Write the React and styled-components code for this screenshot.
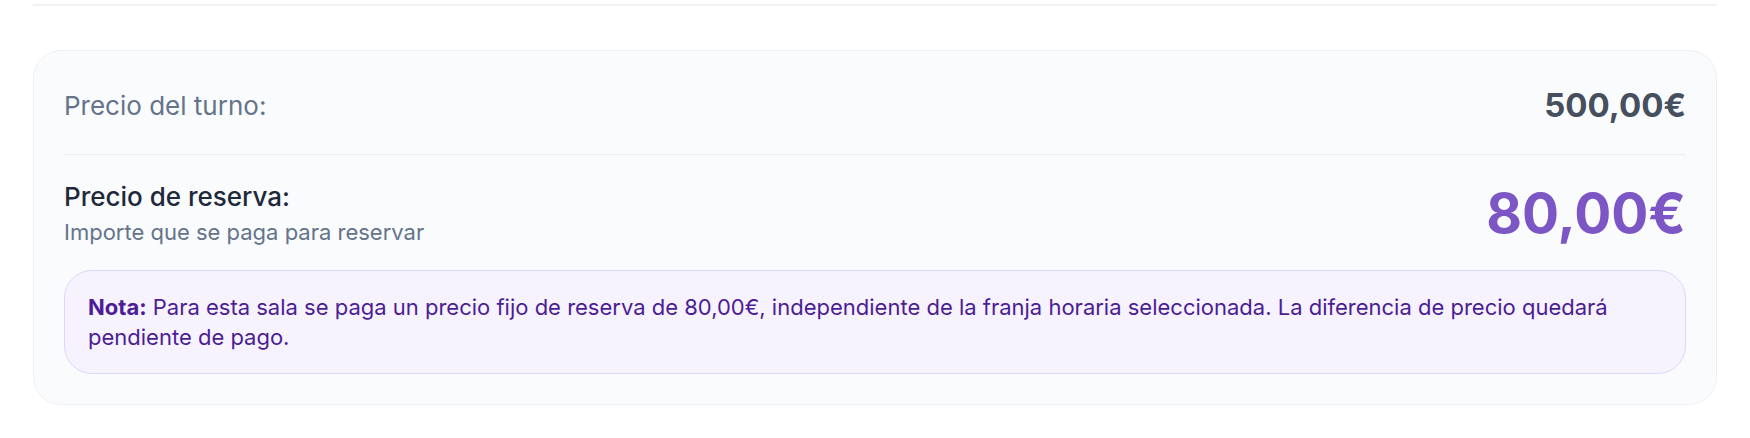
import React from "react";
import styled, { createGlobalStyle } from "styled-components";

const Global = createGlobalStyle`
  html, body { margin: 0; padding: 0; background: #ffffff; }
  body { font-family: "Inter", "Noto Sans", "Liberation Sans", sans-serif; -webkit-font-smoothing: antialiased; }
  * { box-sizing: border-box; }
`;

const Page = styled.div`
  padding: 0 33px;
`;

const TopRule = styled.div`
  margin-top: 4px;
  height: 2px;
  background: #f1f2f4;
`;

const Card = styled.section`
  margin-top: 44px;
  background: #fafbfd;
  border: 1px solid #eef0f3;
  border-radius: 28px;
  padding: 30px;
`;

const Row = styled.div`
  display: flex;
  justify-content: space-between;
  align-items: center;
  ${(p) =>
    p.$divided &&
    `
    padding-bottom: 25px;
    border-bottom: 1px solid #eaedf1;
  `}
  ${(p) => p.$spaced && `margin-top: 18px;`}
`;

const Label = styled.span`
  font-size: 26px;
  line-height: 39px;
  color: #64748b;
  font-weight: 400;
`;

const Amount = styled.span`
  font-weight: 700;
  color: ${(p) => (p.$accent ? "#7c56c4" : "#464f5e")};
  font-size: ${(p) => (p.$accent ? "55px" : "33px")};
  line-height: ${(p) => (p.$accent ? "80px" : "48px")};
`;

const Block = styled.div`
  display: flex;
  flex-direction: column;
`;

const Title = styled.span`
  font-size: 26px;
  line-height: 39px;
  font-weight: 500;
  color: #1e293b;
`;

const Subtitle = styled.span`
  font-size: 22px;
  line-height: 33px;
  color: #64748b;
`;

const Note = styled.div`
  margin-top: 17px;
  background: #f6f3ff;
  border: 1px solid #ddd6fb;
  border-radius: 28px;
  padding: 21px 23px;
  font-size: 22px;
  line-height: 30px;
  color: #4c1d95;
`;

const Strong = styled.strong`
  font-weight: 700;
`;

export default function App() {
  return (
    <Page>
      <Global />
      <TopRule />
      <Card>
        <Row $divided>
          <Label>Precio del turno:</Label>
          <Amount>500,00€</Amount>
        </Row>
        <Row $spaced>
          <Block>
            <Title>Precio de reserva:</Title>
            <Subtitle>Importe que se paga para reservar</Subtitle>
          </Block>
          <Amount $accent>80,00€</Amount>
        </Row>
        <Note>
          <Strong>Nota:</Strong> Para esta sala se paga un precio fijo de reserva de 80,00€,
          independiente de la franja horaria seleccionada. La diferencia de precio quedará
          pendiente de pago.
        </Note>
      </Card>
    </Page>
  );
}
